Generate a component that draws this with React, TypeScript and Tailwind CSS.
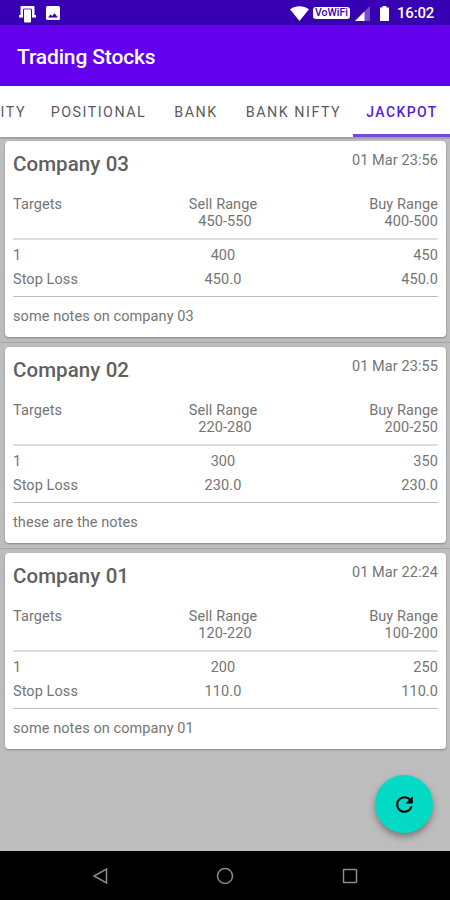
import React from 'react';

interface Stock {
  name: string;
  time: string;
  sellRange: string;
  buyRange: string;
  sell: string;
  buy: string;
  stopLoss: string;
  notes: string;
}

const stocks: Stock[] = [
  { name: 'Company 03', time: '01 Mar 23:56', sellRange: '450-550', buyRange: '400-500', sell: '400', buy: '450', stopLoss: '450.0', notes: 'some notes on company 03' },
  { name: 'Company 02', time: '01 Mar 23:55', sellRange: '220-280', buyRange: '200-250', sell: '300', buy: '350', stopLoss: '230.0', notes: 'these are the notes' },
  { name: 'Company 01', time: '01 Mar 22:24', sellRange: '120-220', buyRange: '100-200', sell: '200', buy: '250', stopLoss: '110.0', notes: 'some notes on company 01' },
];

function StatusBar() {
  return (
    <div className="flex h-[25px] shrink-0 items-center bg-[#3700b3] pl-[18px] pr-[16px] text-white">
      <svg className="mt-[2px] h-[18px] w-[19px]" viewBox="0 0 19 18">
        <path d="M3.500 1h12a1 1 0 0 1 1 1v8H18v2.500h-4V5H5v7.500H1V10h1.500V2a1 1 0 0 1 1-1z" fill="currentColor" />
        <rect x="6" y="4" width="7" height="13.500" rx="1" fill="currentColor" />
        <path d="M5.500 4v10M13.500 4v10M5.500 4h8" stroke="#3700b3" strokeWidth=".8" fill="none" />
      </svg>
      <svg className="ml-[9px] mt-[1px] h-[14px] w-[14px]" viewBox="0 0 14 14">
        <rect width="14" height="14" rx="1.500" fill="currentColor" />
        <path d="M2 11.500l2.500-3 1.700 1.500L8.500 7.200l3.500 4.300z" fill="#3700b3" />
      </svg>
      <div className="grow" />
      <svg className="mt-[1px] h-[15px] w-[19px]" viewBox="0 0 19 15">
        <path d="M0 3.300C5.500-.9 13.500-.9 19 3.300L9.500 15z" fill="currentColor" />
      </svg>
      <span className="ml-[4px] mt-[1px] flex h-[12px] w-[37px] items-center justify-center rounded-[3px] bg-white text-[10.500px] leading-none font-medium text-[#3700b3]">
        VoWiFi
      </span>
      <svg className="ml-[5px] mt-[1px] h-[15px] w-[15px]" viewBox="0 0 15 15">
        <path d="M15 0v15H0z" fill="#fff" fillOpacity=".3" />
        <path d="M9.500 5.500V15H0z" fill="currentColor" />
      </svg>
      <svg className="ml-[10px] mt-[2px] h-[15px] w-[9px]" viewBox="0 0 9 15">
        <path d="M2.500 0h4v1.500H9V15H0V1.500h2.500z" fill="currentColor" />
      </svg>
      <span className="ml-[8px] mt-[2px] w-[37px] whitespace-nowrap text-[15px] leading-none font-medium tracking-[-0.200px]">16:02</span>
    </div>
  );
}

function Tabs() {
  return (
    <nav className="flex h-[51px] shrink-0 bg-white pt-[2px] text-[14.300px] tracking-[1.500px] whitespace-nowrap text-[#5c5c5c]">
      <span className="flex w-[37px] shrink-0 items-center justify-end pr-[11px]">ITY</span>
      <span className="flex w-[123px] shrink-0 items-center justify-center">POSITIONAL</span>
      <span className="flex w-[72px] shrink-0 items-center justify-center">BANK</span>
      <span className="flex w-[121px] shrink-0 items-center justify-center pl-[2px]">BANK NIFTY</span>
      <span className="flex w-[97px] shrink-0 items-center justify-center border-b-[3px] border-[#6f4bd8] pt-[3px] pl-[1px] text-[14px] font-medium tracking-[1.400px] text-[#5a1be0]">
        JACKPOT
      </span>
    </nav>
  );
}

function StockCard({ stock }: { stock: Stock }) {
  return (
    <article className="flex h-[196px] flex-col rounded-[4px] bg-white px-[8px] shadow-[0_1px_2px_rgba(0,0,0,0.3)]">
      <div className="flex h-[54px] items-start justify-between">
        <h2 className="mt-[11px] text-[20.500px] leading-[24px] font-medium text-[#606060]">{stock.name}</h2>
        <span className="mt-[11px] leading-[18px]">{stock.time}</span>
      </div>
      <div className="grid h-[45px] grid-cols-3 border-b-[2px] border-[#dedede] pt-px leading-[17px]">
        <span>Targets</span>
        <span className="pr-[5px] text-center">
          Sell Range
          <span className="block pl-[4px]">{stock.sellRange}</span>
        </span>
        <span className="text-right">
          Buy Range
          <span className="block">{stock.buyRange}</span>
        </span>
      </div>
      <div className="grid h-[57px] grid-cols-3 content-start border-b border-[#bdbdbd] pt-[4px] leading-[24px]">
        <span>1</span>
        <span className="pr-[5px] text-center">{stock.sell}</span>
        <span className="text-right">{stock.buy}</span>
        <span>Stop Loss</span>
        <span className="pr-[5px] text-center">{stock.stopLoss}</span>
        <span className="text-right">{stock.stopLoss}</span>
      </div>
      <p className="mt-[11px] leading-[18px]">{stock.notes}</p>
    </article>
  );
}

export default function App() {
  return (
    <div className="flex h-[900px] w-[450px] flex-col overflow-hidden bg-[#bdbdbd] font-[Roboto,sans-serif]">
      <StatusBar />
      <header className="flex h-[61px] shrink-0 items-center bg-[#6200ee] px-[17px] pt-[5px] text-[21px] font-medium tracking-[-0.150px] text-white">
        Trading Stocks
      </header>
      <Tabs />

      <main className="relative grow border-t-[2px] border-[#a3a3a3] pt-[2px] pr-[4px] pl-[5px] text-[14.500px] tracking-[0.080px] text-[#757575]">
        {stocks.map((stock, i) => (
          <React.Fragment key={stock.name}>
            {i > 0 && <div className="-mr-[4px] -ml-[5px] mt-[5px] mb-[4px] h-px bg-[#a5a5a5]" />}
            <StockCard stock={stock} />
          </React.Fragment>
        ))}

        <button className="absolute right-[17px] bottom-[18px] flex h-[58px] w-[58px] items-center justify-center rounded-full bg-[#03dac5] text-black shadow-[0_4px_7px_rgba(0,0,0,0.35)]">
          <svg className="h-[25px] w-[25px]" viewBox="0 0 24 24" fill="currentColor">
            <path d="M17.650 6.350C16.200 4.900 14.210 4 12 4c-4.420 0-7.990 3.580-7.990 8s3.570 8 7.990 8c3.730 0 6.840-2.550 7.730-6h-2.080c-.82 2.330-3.040 4-5.650 4-3.310 0-6-2.690-6-6s2.690-6 6-6c1.660 0 3.140.69 4.220 1.780L13 11h7V4l-2.350 2.350z" />
          </svg>
        </button>
      </main>

      <footer className="grid h-[49px] shrink-0 grid-cols-3 items-center bg-black px-[38px] text-[#8c8c8c]">
        {/* Back */}
        <svg className="h-[18px] w-[18px] justify-self-center" viewBox="0 0 18 18" fill="none" stroke="currentColor" strokeWidth="1.500">
          <path d="M15.500 2v14L3 9z" />
        </svg>
        {/* Home */}
        <svg className="h-[18px] w-[18px] justify-self-center" viewBox="0 0 18 18" fill="none" stroke="currentColor" strokeWidth="1.500">
          <circle cx="9" cy="9" r="7.500" />
        </svg>
        {/* Recents */}
        <svg className="h-[18px] w-[18px] justify-self-center" viewBox="0 0 18 18" fill="none" stroke="currentColor" strokeWidth="1.500">
          <rect x="2.500" y="2.500" width="13" height="13" rx=".5" />
        </svg>
      </footer>
    </div>
  );
}
